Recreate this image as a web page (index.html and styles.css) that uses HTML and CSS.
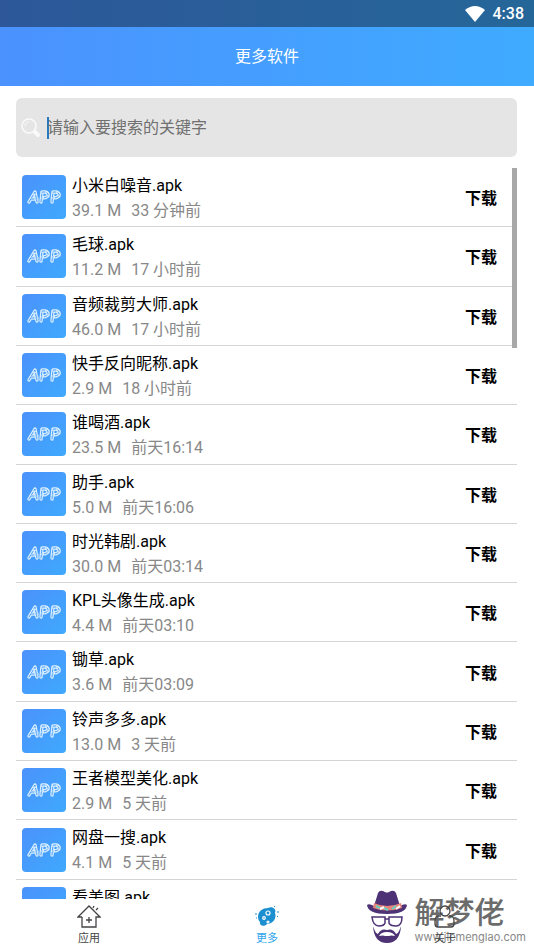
FILE: index.html
```html
<!DOCTYPE html>
<html lang="zh-CN">
<head>
<meta charset="utf-8">
<meta name="viewport" content="width=device-width, initial-scale=1">
<title>更多软件</title>
<link rel="stylesheet" href="styles.css">
</head>
<body>
<svg class="defs" aria-hidden="true">
  <defs>
    <linearGradient id="tile" x1="0" y1="0" x2="1" y2="1"><stop offset="0" stop-color="#4b92fc"/><stop offset="1" stop-color="#3fa9fd"/></linearGradient>
    <symbol id="app" viewBox="0 0 44 44">
      <rect width="44" height="44" rx="4" fill="url(#tile)"/>
      <g fill="none" stroke-linecap="round" stroke-linejoin="round">
        <path stroke="#d9efff" stroke-width="3.4" d="M7 27L13 17L15 27M9 24H15M19 27L20 17H23Q27 18 26 21Q24 23 20 23M30 27L31 17H34Q38 18 37 21Q35 23 31 23"/>
        <path stroke="#4a9dfa" stroke-width="1" stroke-dasharray="3 2" d="M7 27L13 17L15 27M9 24H15M19 27L20 17H23Q27 18 26 21Q24 23 20 23M30 27L31 17H34Q38 18 37 21Q35 23 31 23"/>
      </g>
    </symbol>
  </defs>
</svg>
<div class="screen">
  <header class="top">
    <div class="status">
      <svg class="wifi" viewBox="0 0 20 16" aria-hidden="true"><path d="M0 4Q10-4 20 4L10 16Z" fill="#fff"/></svg>
      <span>4:38</span>
    </div>
    <h1>更多软件</h1>
  </header>
  <main>
    <label class="search">
      <svg viewBox="0 0 20 20" aria-hidden="true"><g fill="none" stroke="#fafafa" stroke-linecap="round"><circle cx="8" cy="8" r="7" stroke-width="1.6"/><path d="M4 8Q4 4 8 4" stroke-width="1"/><path d="M14 14L17 17" stroke-width="4"/></g></svg>
      <span class="caret"></span>
      <input type="text" placeholder="请输入要搜索的关键字" aria-label="搜索">
    </label>
    <div class="viewport">
      <ul class="list">
        <li><svg class="icon"><use href="#app"/></svg><div class="info"><h2>小米白噪音.apk</h2><p><span>39.1 M</span><span>33 分钟前</span></p></div><button>下载</button></li>
        <li><svg class="icon"><use href="#app"/></svg><div class="info"><h2>毛球.apk</h2><p><span>11.2 M</span><span>17 小时前</span></p></div><button>下载</button></li>
        <li><svg class="icon"><use href="#app"/></svg><div class="info"><h2>音频裁剪大师.apk</h2><p><span>46.0 M</span><span>17 小时前</span></p></div><button>下载</button></li>
        <li><svg class="icon"><use href="#app"/></svg><div class="info"><h2>快手反向昵称.apk</h2><p><span>2.9 M</span><span>18 小时前</span></p></div><button>下载</button></li>
        <li><svg class="icon"><use href="#app"/></svg><div class="info"><h2>谁喝酒.apk</h2><p><span>23.5 M</span><span>前天16:14</span></p></div><button>下载</button></li>
        <li><svg class="icon"><use href="#app"/></svg><div class="info"><h2>助手.apk</h2><p><span>5.0 M</span><span>前天16:06</span></p></div><button>下载</button></li>
        <li><svg class="icon"><use href="#app"/></svg><div class="info"><h2>时光韩剧.apk</h2><p><span>30.0 M</span><span>前天03:14</span></p></div><button>下载</button></li>
        <li><svg class="icon"><use href="#app"/></svg><div class="info"><h2>KPL头像生成.apk</h2><p><span>4.4 M</span><span>前天03:10</span></p></div><button>下载</button></li>
        <li><svg class="icon"><use href="#app"/></svg><div class="info"><h2>锄草.apk</h2><p><span>3.6 M</span><span>前天03:09</span></p></div><button>下载</button></li>
        <li><svg class="icon"><use href="#app"/></svg><div class="info"><h2>铃声多多.apk</h2><p><span>13.0 M</span><span>3 天前</span></p></div><button>下载</button></li>
        <li><svg class="icon"><use href="#app"/></svg><div class="info"><h2>王者模型美化.apk</h2><p><span>2.9 M</span><span>5 天前</span></p></div><button>下载</button></li>
        <li><svg class="icon"><use href="#app"/></svg><div class="info"><h2>网盘一搜.apk</h2><p><span>4.1 M</span><span>5 天前</span></p></div><button>下载</button></li>
        <li><svg class="icon"><use href="#app"/></svg><div class="info"><h2>看美图.apk</h2></div></li>
      </ul>
      <div class="thumb"></div>
    </div>
  </main>
  <nav class="tabs">
    <a href="#apps"><svg viewBox="0 0 24 24" aria-hidden="true"><path d="M5 12H1L12 1L23 12H19V22H5V12M12 12V18M9 15H15M16 3L17 1M19 5L21 3" fill="none" stroke="#444" stroke-width="1.3"/></svg>应用</a>
    <a href="#more" class="active"><svg viewBox="0 0 24 24" aria-hidden="true"><path d="M3 12C3 6 8 3 13 3C17 1 22 4 20 8C22 13 18 19 12 19C10 22 4 21 5 17Q3 15 3 12Z" fill="#1c8fd0"/><g fill="none" stroke="#fff" stroke-width="1.2"><circle cx="13" cy="8" r="2"/><circle cx="9" cy="13" r="1.3"/><circle cx="13" cy="17" r="1"/></g><path d="M19 2L20 1M22 7H24M0 9H2M1 13H2M22 11L23 12" stroke="#1c8fd0"/></svg>更多</a>
    <a href="#about"><svg viewBox="0 0 24 24" aria-hidden="true"><g fill="none" stroke="#444" stroke-width="1.3"><circle cx="12" cy="6" r="5"/><path d="M8 11H5Q2 12 2 16V19Q2 22 5 22H18Q21 22 21 19V16Q21 12 18 11H16"/></g></svg>关于</a>
  </nav>
  <div class="mark">
    <svg viewBox="0 0 42 54" aria-hidden="true">
      <path d="M8 16L12 3Q14-1 19 2Q21 3 23 2Q28-1 30 3L34 16Q39 13 41 15Q40 24 21 24Q2 24 1 15Q3 13 8 16Z" fill="#4d3276"/>
      <path d="M8 13Q21 19 35 13L36 18Q21 23 7 18Z" fill="#e98379"/>
      <path d="M10 16L14 18M18 18L22 20M26 19L30 16" stroke="#65d2c4" stroke-width="2"/>
      <path d="M14 19L18 17M30 19L34 16" stroke="#fff" stroke-width="2"/>
      <path d="M6 27H19V33Q18 36 13 36Q7 36 6 27ZM23 27H36Q36 36 30 36Q24 36 23 33ZM19 29H23" fill="none" stroke="#4d3276" stroke-width="1.5"/>
      <path d="M7 36Q8 53 21 53Q34 53 35 36Q33 43 30 44Q27 38 21 40Q15 38 12 44Q9 43 7 36ZM13 46Q15 42 21 42Q27 42 29 46Q25 45 23 46H19Q17 45 13 46Z" fill="#4d3276" fill-rule="evenodd"/>
    </svg>
    <div><strong>解梦佬</strong><small>www.jiemenglao.com</small></div>
  </div>
</div>
</body>
</html>
```
FILE: styles.css
```css
* { box-sizing: border-box; }
body, h1, h2, p, ul { margin: 0; padding: 0; }
body {
  font-family: Roboto, "Noto Sans CJK SC", sans-serif;
  font-size: 16px;
  background: #fff;
  color: #000;
}
.defs { position: absolute; width: 0; height: 0; }
.screen {
  position: relative;
  display: flex;
  flex-direction: column;
  height: 100vh;
  overflow: hidden;
}
.top { background: linear-gradient(90deg, #4b92ff, #3fabff); color: #fff; }
.status {
  display: flex;
  justify-content: flex-end;
  align-items: center;
  gap: 8px;
  height: 27px;
  padding-right: 10px;
  background: rgba(0, 0, 0, 0.4);
  font-weight: 500;
}
.wifi { width: 20px; height: 16px; }
h1 {
  font-size: 16px;
  font-weight: 400;
  line-height: 59px;
  text-align: center;
}
main {
  flex: 1;
  min-height: 0;
  display: flex;
  flex-direction: column;
  gap: 11px;
  padding: 12px 17px 0 16px;
}
.search {
  flex: none;
  display: flex;
  align-items: center;
  height: 59px;
  padding-left: 5px;
  background: #e5e5e5;
  border-radius: 6px;
}
.search svg { width: 20px; height: 20px; margin-right: 6px; }
.caret { width: 2px; height: 22px; margin-right: -2px; background: #2878c0; }
.search input {
  flex: 1;
  min-width: 0;
  padding: 0;
  border: 0;
  outline: 0;
  background: none;
  font: inherit;
}
.search input::placeholder { color: #707070; opacity: 1; }
.viewport { position: relative; flex: 1; min-height: 0; overflow: hidden; }
.list {
  display: grid;
  grid-auto-rows: 1fr;
  min-height: 771px;
  list-style: none;
}
.list li {
  display: flex;
  align-items: center;
  gap: 6px;
  padding: 0 20px 0 6px;
  border-bottom: 1px solid #d4d4d4;
}
.icon { flex: none; width: 44px; height: 44px; }
.info { flex: 1; align-self: flex-start; padding-top: 5px; }
h2 { font-size: 16px; font-weight: 400; line-height: 25px; }
p { display: flex; gap: 10px; line-height: 26px; color: #888; }
button {
  padding: 0;
  border: 0;
  background: none;
  color: #000;
  font: inherit;
  font-weight: 700;
}
.thumb {
  position: absolute;
  top: 0;
  right: 0;
  width: 5px;
  height: 180px;
  background: #a8a8a8;
}
.tabs {
  position: relative;
  z-index: 1;
  flex: none;
  display: grid;
  grid-template-columns: repeat(3, 1fr);
  height: 50px;
}
.tabs a {
  display: flex;
  flex-direction: column;
  align-items: center;
  gap: 2px;
  padding-top: 6px;
  color: #444;
  font-size: 11px;
  line-height: 16px;
  text-decoration: none;
}
.tabs svg { width: 24px; height: 24px; }
.tabs .active { color: #30a5ec; }
.mark {
  position: absolute;
  right: 8px;
  bottom: 5px;
  display: flex;
  gap: 6px;
  color: #6b6b6b;
}
.mark svg { width: 42px; height: 54px; }
.mark div { display: flex; flex-direction: column; padding-top: 6px; }
.mark strong { font-size: 30px; font-weight: 500; line-height: 34px; }
.mark small { font: 11px/14px Inter, sans-serif; color: #888; }
```
